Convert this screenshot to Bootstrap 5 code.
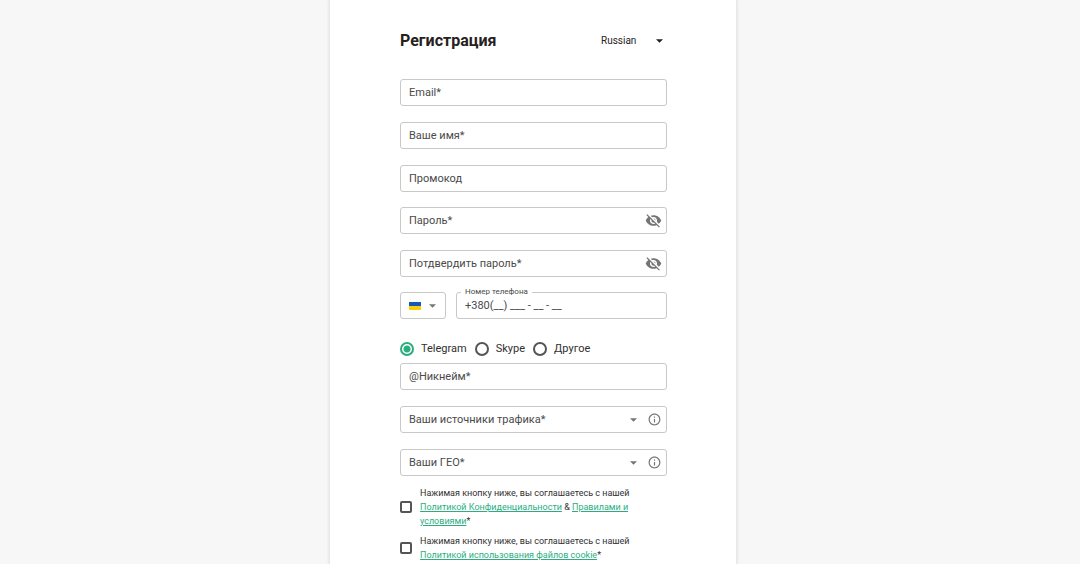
<!DOCTYPE html>
<html lang="ru">
<head>
<meta charset="utf-8">
<meta name="viewport" content="width=device-width, initial-scale=1">
<title>Регистрация</title>
<link href="https://cdn.jsdelivr.net/npm/bootstrap@5.3.0/dist/css/bootstrap.min.css" rel="stylesheet">
<script src="https://cdn.jsdelivr.net/npm/bootstrap@5.3.0/dist/js/bootstrap.bundle.min.js"></script>
<style>
  body { background: #f7f7f7; font-family: Roboto, sans-serif; font-size: 11px; line-height: 14px; color: #303030; padding-right: 14px; }
  .signup { width: 100%; max-width: 408px; background: #fff; border: 1px solid #e8e8e8; border-width: 0 1px; box-shadow: 0 0 3px rgba(0,0,0,.12); padding: 30px 69px 0 70px; }
  .signup h1 { font-size: 16px; line-height: 22px; font-weight: 700; color: #262120; }
  .heading-row { margin-bottom: 27px; }
  .lang { width: 66px; height: 22px; color: #262120; }
  .fields { gap: 16px; }
  .groups { gap: 15px; }
  .phone-row { gap: 10px; }
  .field { height: 27px; border: 1px solid #c8c8c8; border-radius: 3px; background: #fff; }
  .field input, .plain-select { flex: 1 1 0; min-width: 0; border: 0; outline: 0; background: transparent; appearance: none; color: #4a4a4a; padding: 0 8px; height: 25px; font-size: 11px; }
  .lang .plain-select { height: 22px; padding: 0; font-size: 10px; color: #262120; }
  .field input::placeholder { color: #4a4a4a; opacity: 1; }
  .icon-btn { border: 0; background: none; padding: 0; color: #757575; display: flex; }
  .info-btn { margin: 0 5px 0 11px; }
  .icon-btn svg, .arrow { display: block; fill: currentColor; }
  .arrow { pointer-events: none; flex: none; }
  .grey { color: #757575; }
  .country { width: 46px; padding: 0 9px 0 8px; color: #757575; }
  .float-label { left: 4px; top: -7px; padding: 0 4px; background: #fff; font-size: 8px; line-height: 12px; color: #4a4a4a; }
  .contact { gap: 8px; margin-top: 23px; margin-bottom: 7px; }
  .contact label, .consent label { color: #303030; }
  .contact label { padding-left: 7px; }
  .ring { appearance: none; flex: none; width: 14px; height: 14px; margin: 0; border: 2px solid #555; border-radius: 50%; }
  .ring:checked { border-color: #2bae7f; background: radial-gradient(circle, #2bae7f 3px, #fff 4px); }
  .tick { appearance: none; flex: none; width: 12px; height: 12px; margin: 0 1px 0 0; border: 2px solid #555; border-radius: 2px; background: #fff; }
  .tick:checked { background: #2bae7f; }
  .consents { gap: 6px; margin-top: 10px; padding-bottom: 2px; }
  .consent { gap: 7px; font-size: 9px; }
  .consent a { color: #2bae7f; }
</style>
</head>
<body>
<main class="d-flex justify-content-center min-vh-100">
  <form class="signup">
    <div class="heading-row d-flex justify-content-between align-items-center">
      <h1 class="m-0">Регистрация</h1>
      <div class="lang d-flex align-items-center">
        <select class="plain-select" aria-label="Язык"><option>Russian</option></select>
        <svg class="arrow me-1" width="7" height="4" viewBox="0 0 8 4"><path d="M0 0h8L4 4z"/></svg>
      </div>
    </div>

    <div class="groups d-flex flex-column">
      <div class="fields d-flex flex-column">
        <div class="field d-flex"><input type="email" aria-label="Email" placeholder="Email*"></div>
        <div class="field d-flex"><input type="text" aria-label="Ваше имя" placeholder="Ваше имя*"></div>
        <div class="field d-flex"><input type="text" aria-label="Промокод" placeholder="Промокод"></div>
      </div>
      <div class="fields d-flex flex-column">
        <div class="field d-flex align-items-center pe-1">
          <input type="password" aria-label="Пароль" placeholder="Пароль*">
          <button type="button" class="icon-btn" aria-label="Показать пароль"><svg width="17" height="17" viewBox="0 0 24 24"><path d="M12 7c2.76 0 5 2.24 5 5 0 .65-.13 1.26-.36 1.83l2.92 2.92c1.51-1.26 2.7-2.89 3.43-4.75-1.73-4.39-6-7.5-11-7.5-1.4 0-2.74.25-3.98.7l2.16 2.16C10.74 7.13 11.35 7 12 7zM2 4.27l2.28 2.28.46.46C3.08 8.3 1.78 10.02 1 12c1.73 4.39 6 7.5 11 7.5 1.55 0 3.03-.3 4.38-.84l.42.42L19.73 22 21 20.73 3.27 3 2 4.27zM7.53 9.8l1.55 1.55c-.05.21-.08.43-.08.65 0 1.66 1.34 3 3 3 .22 0 .44-.03.65-.08l1.55 1.55c-.67.33-1.41.53-2.2.53-2.76 0-5-2.24-5-5 0-.79.2-1.53.53-2.2zm4.31-.78l3.15 3.15.02-.16c0-1.66-1.34-3-3-3l-.17.01z"/></svg></button>
        </div>
        <div class="field d-flex align-items-center pe-1">
          <input type="password" aria-label="Потдвердить пароль" placeholder="Потдвердить пароль*">
          <button type="button" class="icon-btn" aria-label="Показать пароль"><svg width="17" height="17" viewBox="0 0 24 24"><path d="M12 7c2.76 0 5 2.24 5 5 0 .65-.13 1.26-.36 1.83l2.92 2.92c1.51-1.26 2.7-2.89 3.43-4.75-1.73-4.39-6-7.5-11-7.5-1.4 0-2.74.25-3.98.7l2.16 2.16C10.74 7.13 11.35 7 12 7zM2 4.27l2.28 2.28.46.46C3.08 8.3 1.78 10.02 1 12c1.73 4.39 6 7.5 11 7.5 1.55 0 3.03-.3 4.38-.84l.42.42L19.73 22 21 20.73 3.27 3 2 4.27zM7.53 9.8l1.55 1.55c-.05.21-.08.43-.08.65 0 1.66 1.34 3 3 3 .22 0 .44-.03.65-.08l1.55 1.55c-.67.33-1.41.53-2.2.53-2.76 0-5-2.24-5-5 0-.79.2-1.53.53-2.2zm4.31-.78l3.15 3.15.02-.16c0-1.66-1.34-3-3-3l-.17.01z"/></svg></button>
        </div>
      </div>
      <div class="phone-row d-flex">
        <button type="button" class="field country d-flex align-items-center justify-content-between" aria-label="Код страны: Украина">
          <svg width="12" height="8" viewBox="0 0 12 8"><path fill="#1558b8" d="M0 0h12v4H0z"/><path fill="#f8cf10" d="M0 4h12v4H0z"/></svg>
          <svg class="arrow" width="7" height="4" viewBox="0 0 8 4"><path d="M0 0h8L4 4z"/></svg>
        </button>
        <div class="field d-flex flex-fill position-relative">
          <label class="float-label position-absolute" for="phone">Номер телефона</label>
          <input type="tel" id="phone" value="+380(__) ___ - __ - __">
        </div>
      </div>
    </div>

    <div class="contact d-flex align-items-center">
      <div class="d-flex align-items-center"><input class="ring" type="radio" name="contact" id="c1" checked><label for="c1">Telegram</label></div>
      <div class="d-flex align-items-center"><input class="ring" type="radio" name="contact" id="c2"><label for="c2">Skype</label></div>
      <div class="d-flex align-items-center"><input class="ring" type="radio" name="contact" id="c3"><label for="c3">Другое</label></div>
    </div>

    <div class="fields d-flex flex-column">
      <div class="field d-flex"><input type="text" aria-label="Никнейм" placeholder="@Никнейм*"></div>
      <div class="field d-flex align-items-center">
        <select class="plain-select" aria-label="Ваши источники трафика"><option>Ваши источники трафика*</option></select>
        <svg class="arrow grey" width="7" height="4" viewBox="0 0 8 4"><path d="M0 0h8L4 4z"/></svg>
        <button type="button" class="icon-btn info-btn" aria-label="Подробнее"><svg width="13" height="13" viewBox="1 1 22 22"><path d="M11 7h2v2h-2zm0 4h2v6h-2zm1-9C6.480 2 2 6.480 2 12s4.480 10 10 10 10-4.480 10-10S17.520 2 12 2zm0 18c-4.410 0-8-3.590-8-8s3.590-8 8-8 8 3.590 8 8-3.590 8-8 8z"/></svg></button>
      </div>
      <div class="field d-flex align-items-center">
        <select class="plain-select" aria-label="Ваши ГЕО"><option>Ваши ГЕО*</option></select>
        <svg class="arrow grey" width="7" height="4" viewBox="0 0 8 4"><path d="M0 0h8L4 4z"/></svg>
        <button type="button" class="icon-btn info-btn" aria-label="Подробнее"><svg width="13" height="13" viewBox="1 1 22 22"><path d="M11 7h2v2h-2zm0 4h2v6h-2zm1-9C6.480 2 2 6.480 2 12s4.480 10 10 10 10-4.480 10-10S17.520 2 12 2zm0 18c-4.410 0-8-3.590-8-8s3.590-8 8-8 8 3.590 8 8-3.590 8-8 8z"/></svg></button>
      </div>
    </div>

    <div class="consents d-flex flex-column">
      <div class="consent d-flex align-items-center">
        <input class="tick" type="checkbox" id="terms">
        <label for="terms">Нажимая кнопку ниже, вы соглашаетесь с нашей <a href="#privacy">Политикой Конфиденциальности</a> &amp; <a href="#rules">Правилами и условиями</a>*</label>
      </div>
      <div class="consent d-flex align-items-center">
        <input class="tick" type="checkbox" id="cookies">
        <label for="cookies">Нажимая кнопку ниже, вы соглашаетесь с нашей <a href="#cookie-policy">Политикой использования файлов cookie</a>*</label>
      </div>
    </div>
  </form>
</main>
</body>
</html>
